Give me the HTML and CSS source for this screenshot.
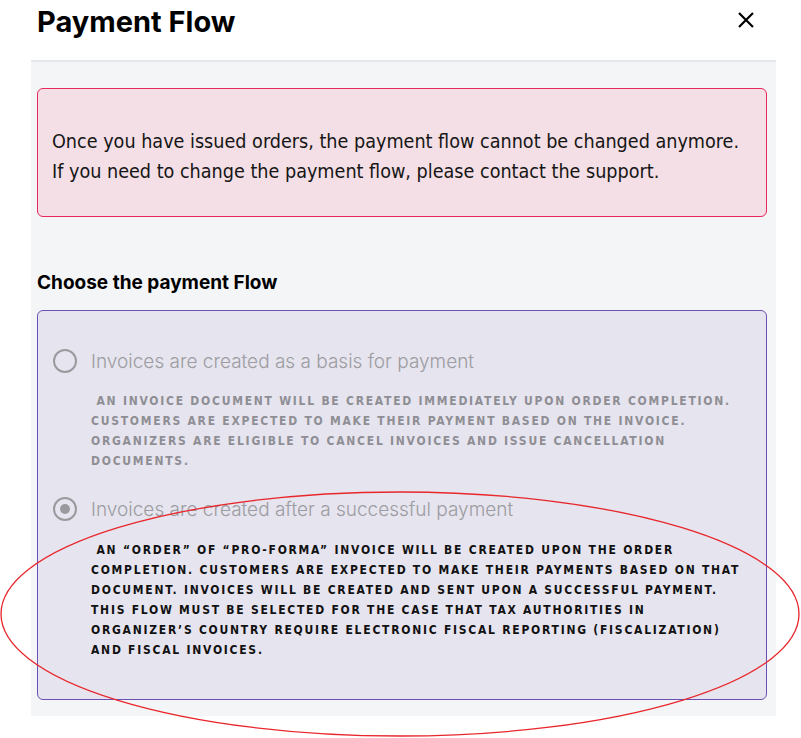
FILE: index.html
```html
<!DOCTYPE html>
<html lang="en">
<head>
    <meta charset="UTF-8">
    <meta name="viewport" content="width=device-width, initial-scale=1.0">
    <title>Payment Flow</title>
    <link rel="stylesheet" href="styles.css">
</head>
<body>
    <div class="modal">
        <div class="modal-head">
            <h1>Payment Flow</h1>
            <button class="close" aria-label="Close">
                <svg width="18" height="18" viewBox="0 0 18 18"><path d="M2 2L16 16M16 2L2 16" stroke="#000" stroke-width="2.2" fill="none"/></svg>
            </button>
        </div>

        <div class="modal-body">
            <div class="alert">
                <p>Once you have issued orders, the payment flow cannot be changed anymore.<br>If you need to change the payment flow, please contact the support.</p>
            </div>

            <h2>Choose the payment Flow</h2>

            <div class="flow-box">
                <label class="option">
                    <span class="radio"></span>
                    <span class="option-text">Invoices are created as a basis for payment</span>
                </label>
                <p class="desc muted">&nbsp;An invoice document will be created immediately upon order completion. Customers are expected to make their payment based on the invoice. Organizers are eligible to cancel invoices and issue cancellation documents.</p>

                <label class="option">
                    <span class="radio checked"></span>
                    <span class="option-text">Invoices are created after a successful payment</span>
                </label>
                <p class="desc">&nbsp;An “order” of “pro-forma” invoice will be created upon the order completion. Customers are expected to make their payments based on that document. Invoices will be created and sent upon a successful payment. This flow must be selected for the case that tax authorities in organizer’s country require electronic fiscal reporting (fiscalization) and fiscal invoices.</p>
            </div>
        </div>

        <svg class="annotation" width="801" height="250" viewBox="0 0 801 250">
            <ellipse cx="400" cy="123" rx="399" ry="122" fill="none" stroke="#e8262b" stroke-width="1.3"/>
        </svg>
    </div>
</body>
</html>
```

FILE: styles.css
```css
*{
    margin: 0;
    padding: 0;
    box-sizing: border-box;
}

body{
    background-color: #fff;
    font-family: Inter, "Noto Sans", sans-serif;
    color: #000;
}

.modal{
    position: relative;
    width: 801px;
    height: 738px;
}

.modal-head{
    height: 60px;
    display: flex;
    justify-content: space-between;
    align-items: flex-start;
    padding: 4px 45px 0 37px;
}

.modal-head h1{
    font-size: 29px;
    font-weight: 700;
    line-height: 36px;
}

.close{
    border: none;
    background: none;
    margin-top: 7px;
    margin-right: 1px;
    cursor: pointer;
}

.modal-body{
    width: 745px;
    margin-left: 31px;
    background-color: #f4f5f7;
    border-top: 2px solid #e6e7ea;
    padding: 26px 9px 16px 6px;
}

.alert{
    background-color: #f3dfe5;
    border: 1px solid #e8285a;
    border-radius: 6px;
    padding: 38px 14px 29px;
}

.alert p{
    font-family: "DejaVu Sans Condensed", "DejaVu Sans", sans-serif;
    font-stretch: condensed;
    font-size: 19.6px;
    line-height: 30px;
    color: #161616;
}

.modal-body h2{
    font-size: 19px;
    font-weight: 700;
    line-height: 24px;
    margin: 54px 0 15px;
}

.flow-box{
    background-color: #e6e4ee;
    border: 1px solid #6d4fb3;
    border-radius: 6px;
    padding: 37px 15px 39px;
}

.option{
    display: flex;
    align-items: center;
    gap: 14px;
    height: 26px;
}

.radio{
    width: 24px;
    height: 24px;
    border: 2px solid #9a9a9e;
    border-radius: 50%;
    display: flex;
    justify-content: center;
    align-items: center;
}

.radio.checked::after{
    content: "";
    width: 10px;
    height: 10px;
    border-radius: 50%;
    background-color: #9a9a9e;
}

.option-text{
    font-size: 19px;
    font-weight: 300;
    color: #9c9ca1;
}

.desc{
    font-family: "DejaVu Sans Condensed", "DejaVu Sans", sans-serif;
    font-stretch: condensed;
    font-size: 12px;
    font-weight: 700;
    letter-spacing: 1.75px;
    text-transform: uppercase;
    line-height: 20px;
    color: #111;
    margin: 18px 0 0 38px;
}

.desc.muted{
    color: #8e8e94;
    margin-top: 17px;
    margin-bottom: 25px;
}

.annotation{
    position: absolute;
    left: 0;
    top: 491px;
    pointer-events: none;
}
```
